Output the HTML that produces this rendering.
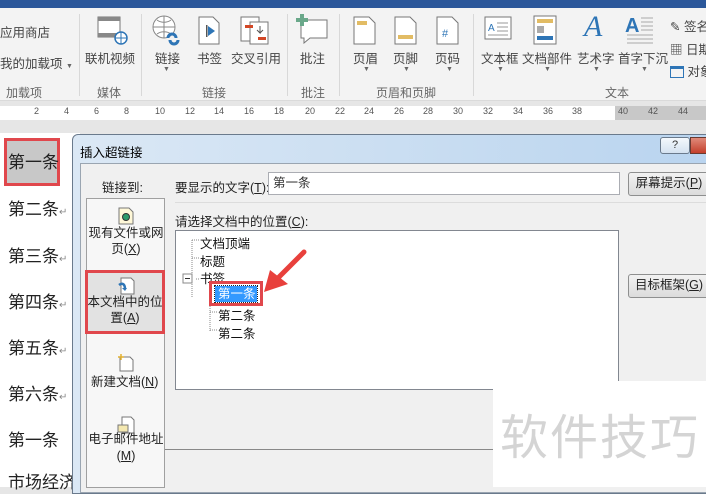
<!DOCTYPE html>
<html><head><meta charset="utf-8"><style>
*{margin:0;padding:0;box-sizing:border-box}
body{width:706px;height:487px;overflow:hidden;position:relative;background:#e6e6e6;font-family:"Liberation Sans","Microsoft YaHei","Noto Sans CJK SC",sans-serif;font-size:12px;color:#333}
.a{position:absolute;white-space:nowrap}
.lbl{font-size:12.5px;color:#444}
.grp{font-size:12px;color:#666}
.sep{position:absolute;width:1px;background:#d8d8d8;top:14px;height:82px}
.dt{font-size:17px;color:#222;font-family:"Liberation Sans","Noto Sans CJK SC",sans-serif}
.btn{position:absolute;border:1px solid #8e8f8f;border-radius:3px;background:linear-gradient(#f2f2f2,#dcdcdc);font-size:12.5px;text-align:center;line-height:21px;color:#222}
.arr{font-size:7px;color:#666}
.tr{font-size:12.5px;color:#111}
</style></head><body>
<div class="a" style="left:0;top:0;width:706px;height:8px;background:#2b579a"></div>
<div class="a" style="left:0;top:8px;width:706px;height:93px;background:#f3f3f3;border-bottom:1px solid #dadada"></div>
<div class="a lbl" style="left:0;top:22px">应用商店</div>
<div class="a lbl" style="left:0;top:53px">我的加载项 <span class="arr">▼</span></div>
<div class="a grp" style="left:6px;top:84px">加载项</div>
<div class="sep" style="left:79px"></div>
<svg class="a" style="left:97px;top:16px" width="32" height="30"><rect x="1" y="1" width="22" height="20" fill="#fff" stroke="#777"/><rect x="1" y="1" width="22" height="4" fill="#888"/><rect x="1" y="17" width="22" height="4" fill="#888"/><circle cx="24" cy="22" r="6" fill="#fff" stroke="#2e75b6" stroke-width="1.5"/><path d="M18 22h12M24 16v12" stroke="#2e75b6"/></svg>
<div class="a lbl" style="left:85px;top:48px">联机视频</div>
<div class="a grp" style="left:97px;top:84px">媒体</div>
<div class="sep" style="left:141px"></div>
<svg class="a" style="left:151px;top:14px" width="34" height="34"><circle cx="13" cy="13" r="11" fill="#fff" stroke="#888"/><path d="M2 13h22M13 2v22M6 6c4 3 10 3 14 0M6 20c4-3 10-3 14 0" stroke="#888" fill="none"/><path d="M17 24a4 4 0 0 1 8 0M19 26a4 4 0 0 0 8 0" stroke="#2e75b6" stroke-width="3" fill="none"/></svg>
<div class="a lbl" style="left:155px;top:48px">链接</div>
<div class="a arr" style="left:163px;top:66px">▼</div>
<svg class="a" style="left:198px;top:16px" width="24" height="30"><path d="M1 1h14l6 6v21H1z" fill="#fff" stroke="#777"/><rect x="8" y="9" width="1.5" height="12" fill="#555"/><path d="M10 10l7 5-7 5z" fill="#2e75b6"/></svg>
<div class="a lbl" style="left:197px;top:48px">书签</div>
<svg class="a" style="left:240px;top:16px" width="30" height="30"><rect x="1" y="1" width="18" height="24" fill="#fff" stroke="#777"/><rect x="10" y="6" width="18" height="22" fill="#fff" stroke="#777"/><rect x="5" y="9" width="8" height="3" fill="#d24726"/><rect x="18" y="21" width="8" height="3" fill="#d24726"/><path d="M20 10v7l-3-3M20 17l3-3" stroke="#555" fill="none"/></svg>
<div class="a lbl" style="left:231px;top:48px">交叉引用</div>
<div class="a grp" style="left:202px;top:84px">链接</div>
<div class="sep" style="left:287px"></div>
<svg class="a" style="left:296px;top:12px" width="34" height="32"><path d="M5 8h26v18H14l-6 5v-5H5z" fill="#fff" stroke="#777"/><path d="M6 2v12M0 8h12" stroke="#6aa88a" stroke-width="4"/></svg>
<div class="a lbl" style="left:300px;top:48px">批注</div>
<div class="a grp" style="left:301px;top:84px">批注</div>
<div class="sep" style="left:339px"></div>
<svg class="a" style="left:353px;top:16px" width="24" height="30"><path d="M1 1h15l6 6v21H1z" fill="#fff" stroke="#777"/><rect x="4" y="5" width="10" height="4" fill="#e2bc64"/></svg>
<div class="a lbl" style="left:353px;top:48px">页眉</div>
<div class="a arr" style="left:363px;top:66px">▼</div>
<svg class="a" style="left:394px;top:16px" width="24" height="30"><path d="M1 1h15l6 6v21H1z" fill="#fff" stroke="#777"/><rect x="4" y="19" width="15" height="4" fill="#e2bc64"/></svg>
<div class="a lbl" style="left:393px;top:48px">页脚</div>
<div class="a arr" style="left:403px;top:66px">▼</div>
<svg class="a" style="left:436px;top:16px" width="24" height="30"><path d="M1 1h15l6 6v21H1z" fill="#fff" stroke="#777"/><text x="6" y="21" font-size="11" fill="#2e75b6" font-family="Liberation Sans">#</text></svg>
<div class="a lbl" style="left:435px;top:48px">页码</div>
<div class="a arr" style="left:446px;top:66px">▼</div>
<div class="a grp" style="left:376px;top:84px">页眉和页脚</div>
<div class="sep" style="left:473px"></div>
<svg class="a" style="left:484px;top:16px" width="30" height="28"><rect x="1" y="1" width="26" height="22" fill="#fff" stroke="#777"/><text x="4" y="15" font-size="10" fill="#2e75b6" font-family="Liberation Sans">A</text><path d="M13 7h11M13 11h11M13 15h11M4 19h20" stroke="#999"/></svg>
<div class="a lbl" style="left:481px;top:48px">文本框</div>
<div class="a arr" style="left:497px;top:66px">▼</div>
<svg class="a" style="left:533px;top:15px" width="26" height="30"><rect x="1" y="1" width="22" height="28" fill="#fff" stroke="#777"/><rect x="4" y="4" width="16" height="4" fill="#e2bc64"/><rect x="4" y="11" width="7" height="7" fill="#aaa"/><rect x="4" y="21" width="16" height="4" fill="#2e75b6"/></svg>
<div class="a lbl" style="left:522px;top:48px">文档部件</div>
<div class="a arr" style="left:544px;top:66px">▼</div>
<div class="a" style="left:584px;top:10px;font-size:30px;font-style:italic;color:#2e75b6;font-family:'Liberation Serif',serif">A</div>
<div class="a lbl" style="left:577px;top:48px">艺术字</div>
<div class="a arr" style="left:593px;top:66px">▼</div>
<svg class="a" style="left:625px;top:14px" width="30" height="32"><text x="0" y="18" font-size="20" fill="#2e75b6" font-family="Liberation Sans" font-weight="bold">A</text><path d="M16 4h12M16 8h12M16 12h12M16 16h12M2 21h26M2 25h26M2 29h26" stroke="#aaa"/></svg>
<div class="a lbl" style="left:618px;top:48px">首字下沉</div>
<div class="a arr" style="left:641px;top:66px">▼</div>
<div class="a lbl" style="left:670px;top:16px">✎ 签名</div>
<div class="a lbl" style="left:670px;top:39px">▦ 日期</div>
<div class="a lbl" style="left:670px;top:61px"><span style="display:inline-block;width:14px;height:12px;border:1px solid #2e75b6;border-top:3px solid #2e75b6;vertical-align:-2px"></span> 对象</div>
<div class="a grp" style="left:605px;top:84px">文本</div>
<div class="a" style="left:0;top:102px;width:706px;height:21px;background:#e6e6e6"></div>
<div class="a" style="left:0;top:106px;width:706px;height:14px;background:#fff"></div>
<div class="a" style="left:615px;top:106px;width:91px;height:14px;background:#c8c8c8"></div>
<div class="a" style="left:0;top:106px;font-size:9px;color:#555">
<span class="a" style="left:34px">2</span><span class="a" style="left:64px">4</span><span class="a" style="left:94px">6</span><span class="a" style="left:124px">8</span><span class="a" style="left:155px">10</span><span class="a" style="left:185px">12</span><span class="a" style="left:214px">14</span><span class="a" style="left:244px">16</span><span class="a" style="left:274px">18</span><span class="a" style="left:305px">20</span><span class="a" style="left:335px">22</span><span class="a" style="left:364px">24</span><span class="a" style="left:394px">26</span><span class="a" style="left:423px">28</span><span class="a" style="left:453px">30</span><span class="a" style="left:483px">32</span><span class="a" style="left:513px">34</span><span class="a" style="left:543px">36</span><span class="a" style="left:572px">38</span><span class="a" style="left:618px">40</span><span class="a" style="left:648px">42</span><span class="a" style="left:678px">44</span></div>
<div class="a" style="left:0;top:133px;width:80px;height:354px;background:#fff"></div>
<div class="a" style="left:4px;top:138px;width:56px;height:48px;background:#c8c8c8;border:3px solid #e0474c"></div>
<div class="a dt" style="left:8px;top:148px">第一条</div>
<div class="a dt" style="left:8px;top:195px">第二条<span style="font-size:10px;color:#888">↵</span></div>
<div class="a dt" style="left:8px;top:242px">第三条<span style="font-size:10px;color:#888">↵</span></div>
<div class="a dt" style="left:8px;top:288px">第四条<span style="font-size:10px;color:#888">↵</span></div>
<div class="a dt" style="left:8px;top:334px">第五条<span style="font-size:10px;color:#888">↵</span></div>
<div class="a dt" style="left:8px;top:380px">第六条<span style="font-size:10px;color:#888">↵</span></div>
<div class="a dt" style="left:8px;top:426px">第一条</div>
<div class="a dt" style="left:8px;top:468px">市场经济</div>
<div class="a" style="left:72px;top:134px;width:640px;height:360px;background:linear-gradient(90deg,#dbe8f5,#c7dcf1 60%,#b9d4ef);border:1px solid #6a7a8c;border-radius:6px 0 0 0"></div>
<div class="a" style="left:80px;top:142px;font-size:12.5px;color:#000">插入超链接</div>
<div class="a" style="left:660px;top:137px;width:30px;height:17px;border:1px solid #6a7a8c;border-radius:3px;background:linear-gradient(#f4f8fc,#d4e2f0);text-align:center;font-size:11px;line-height:15px;color:#333">?</div>
<div class="a" style="left:690px;top:137px;width:20px;height:17px;background:linear-gradient(#e08a7a,#c4402c);border:1px solid #6a3a30"></div>
<div class="a" style="left:80px;top:163px;width:630px;height:330px;background:#f0f0f0;border:1px solid #9aa5b1"></div>
<div class="a" style="left:102px;top:177px;font-size:12.5px;color:#222">链接到:</div>
<div class="a" style="left:86px;top:198px;width:79px;height:290px;background:#f7f7f7;border:1px solid #a0a0a0"></div>
<svg class="a" style="left:117px;top:207px" width="18" height="18"><path d="M2 1h10l4 4v12H2z" fill="#fff8d8" stroke="#777"/><circle cx="9" cy="10" r="3.5" fill="#2e9a6a" stroke="#333"/></svg>
<div class="a" style="left:88px;top:225px;font-size:12.5px;color:#222;text-align:center;width:76px;white-space:normal;line-height:16px">现有文件或网页(<u>X</u>)</div>
<div class="a" style="left:85px;top:270px;width:80px;height:64px;background:#e2e2e2;border:3px solid #e0474c"></div>
<svg class="a" style="left:117px;top:277px" width="18" height="18"><path d="M4 1h10l3 3v13H4z" fill="#fff" stroke="#777"/><path d="M2 8c4-3 6 0 6 4" stroke="#2e75b6" stroke-width="2.5" fill="none"/><path d="M8 14l-3-3h5z" fill="#2e75b6"/></svg>
<div class="a" style="left:86px;top:294px;font-size:12.5px;color:#222;text-align:center;width:78px;white-space:normal;line-height:16px">本文档中的位置(<u>A</u>)</div>
<svg class="a" style="left:117px;top:354px" width="18" height="18"><path d="M3 3h10l3 3v11H3z" fill="#fff" stroke="#777"/><path d="M4 0v6M1 3h6" stroke="#e2b030" stroke-width="1.5"/></svg>
<div class="a" style="left:91px;top:371px;font-size:12.5px;color:#222">新建文档(<u>N</u>)</div>
<svg class="a" style="left:117px;top:416px" width="18" height="18"><path d="M5 1h9l3 3v13H5z" fill="#fff" stroke="#777"/><rect x="1" y="9" width="10" height="7" fill="#f4e8b0" stroke="#777"/></svg>
<div class="a" style="left:88px;top:431px;font-size:12.5px;color:#222;text-align:center;width:76px;white-space:normal;line-height:17px">电子邮件地址(<u>M</u>)</div>
<div class="a" style="left:175px;top:177px;font-size:12.5px;color:#222">要显示的文字(<u>T</u>):</div>
<div class="a" style="left:268px;top:172px;width:352px;height:23px;background:#fff;border:1px solid #abadb3;padding:2px 4px;font-size:12.5px;line-height:17px">第一条</div>
<div class="btn" style="left:628px;top:172px;width:82px;height:24px">屏幕提示(<u>P</u>)</div>
<div class="a" style="left:175px;top:202px;width:535px;height:1px;background:#dcdcdc"></div>
<div class="a" style="left:175px;top:211px;font-size:12.5px;color:#222">请选择文档中的位置(<u>C</u>):</div>
<div class="a" style="left:175px;top:230px;width:444px;height:160px;background:#fff;border:1px solid #828790"></div>
<svg class="a" style="left:180px;top:234px" width="100" height="110">
<path d="M12 6v58M12 6h8M12 24h8M16 45h4M30 50v48M30 60h8M30 78h8M30 96h8" stroke="#888" stroke-dasharray="1,1" fill="none"/>
<rect x="3" y="40" width="9" height="9" fill="#fff" stroke="#888"/><path d="M5 44.5h5" stroke="#333"/></svg>
<div class="a tr" style="left:200px;top:233px">文档顶端</div>
<div class="a tr" style="left:200px;top:251px">标题</div>
<div class="a tr" style="left:200px;top:268px">书签</div>
<div class="a" style="left:209px;top:281px;width:54px;height:25px;border:3px solid #e0474c;background:#fff"></div>
<div class="a" style="left:215px;top:286px;width:42px;height:16px;background:#3399ff;outline:1px dotted #222;color:#fff;font-size:12.5px;line-height:16px;padding-left:3px">第一条</div>
<div class="a tr" style="left:218px;top:305px">第二条</div>
<div class="a tr" style="left:218px;top:323px">第二条</div>
<svg class="a" style="left:258px;top:248px" width="60" height="50"><path d="M46 4L20 30" stroke="#e8403c" stroke-width="5" stroke-linecap="round"/><path d="M6 44L12 22L30 36z" fill="#e8403c"/></svg>
<div class="btn" style="left:628px;top:274px;width:82px;height:24px">目标框架(<u>G</u>)</div>
<div class="a" style="left:493px;top:381px;width:213px;height:106px;background:#fff"></div>
<div class="a" style="left:165px;top:449px;width:328px;height:1px;background:#888"></div>
<div class="a" style="left:500px;top:398px;font-size:48px;color:#d4d4d4;font-family:'Noto Sans CJK SC',sans-serif;letter-spacing:2px">软件技巧</div>
</body></html>
